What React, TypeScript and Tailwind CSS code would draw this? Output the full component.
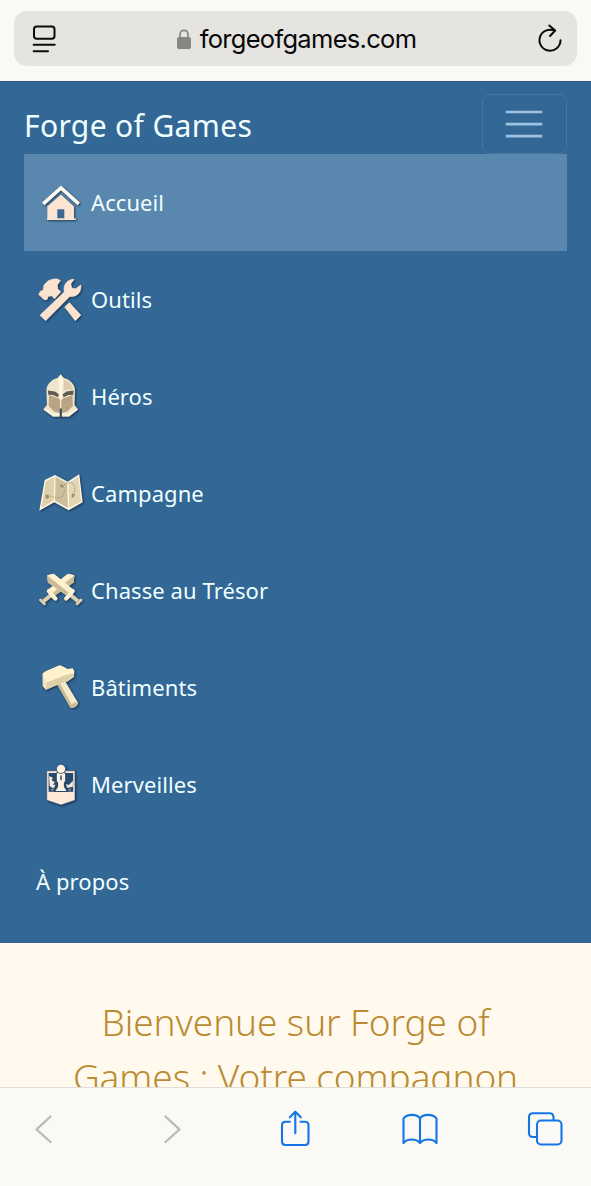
import type { ReactNode } from "react";

const shadow = "drop-shadow-[1px_1.5px_1px_rgba(15,35,60,0.75)]";

function Icon({ children }: { children: ReactNode }) {
  return (
    <svg viewBox="0 0 50 49" className={`h-[49px] w-[50px] shrink-0 ${shadow}`}>
      {children}
    </svg>
  );
}

const HouseIcon = () => (
  <Icon>
    <path d="M11.3 28.5 25 16.5 38 28.5V40.3H39.6V42H11V40.3H11.3Z" fill="#fbe5d2" />
    <path d="M21.3 31.3H28.3V40.3H21.3Z" fill="#3a6790" />
    <path d="M7.2 25.8 25 9.8 42.8 25.8" fill="none" stroke="#fffaf0" strokeWidth="3.6" />
  </Icon>
);

const ToolsIcon = () => (
  <Icon>
    <g fill="#fbe3d0" stroke="#fbe3d0" strokeWidth=".7" strokeLinejoin="round">
      <path d="M2.7 19.5 4.7 15.9 7 15.8 8 10 12.3 5.7 17.3 4 21.5 4 24.5 5.5 21.3 10 21.7 14 24.8 16.8 18.7 23.8 15.7 21 12.3 21.3 10.9 24.8 8 24.5Z" />
      <path d="M28.7 32 33.5 27.7 44.9 40.2 39.3 45.7Z" />
      <path d="M4 40.3 28.3 16.9C27 10.5 30.5 4.4 38 4.3L34.8 8.9 35.7 13 39.7 13.8 44.8 10C46 17 40.5 22.7 33.8 21.4L9.7 45.7Z" />
    </g>
  </Icon>
);

const HelmetIcon = () => (
  <Icon>
    <path d="M24.7 2.3 28 6C34.5 7.8 39 12.5 39 18.5L38.5 33 42.3 37.5 33 44.8H17L7.2 37.5 10.9 33 10.4 18.5C10.4 12.5 15 7.8 21.4 6Z" fill="#efe5ce" />
    <path d="M13 23 24 27V41L18 39.5 12.7 34Z" fill="#b9a583" />
    <path d="M36.5 23 25.4 27V41L31.4 39.5 36.8 34Z" fill="#b9a583" />
    <path d="M11.8 18.6 19 19.6 22.8 22.2 22 25.2 17 22.9 12.3 22.7Z" fill="#625b4f" />
    <path d="M37.7 18.6 30.5 19.6 26.7 22.2 27.5 25.2 32.5 22.9 37.2 22.7Z" fill="#625b4f" />
    <path d="M24.7 2.5 27 7.5 26.5 18 26 27 24.7 29 23.5 27 23 18 22.5 7.5Z" fill="#fff5df" />
    <path d="M28 7.8C33.5 9.7 36.5 13 36.7 17L29 18 27.5 17.5Z" fill="#dccdaf" />
    <path d="M24.8 36.5V45" stroke="#2d4258" strokeWidth="2" />
    <path d="M8.8 37.2 17.8 43.2 23 42.5M40.7 37.2 32 43.2 26.6 42.5" stroke="#fff5df" strokeWidth="1.7" fill="none" />
  </Icon>
);

const MapIcon = () => (
  <Icon>
    <path d="M8.7 11 19 6 31.7 12.7 43.3 5.3 46.7 33.3 32.7 41.3 18.3 33.3 3.3 41.7Z" fill="#fff8e5" />
    <path d="M9.8 12.2 18.3 7.7 17.6 31.8 5.3 38.7Z" fill="#ded0ab" />
    <path d="M19.5 7.7 31.2 14 32 39 19 31.8Z" fill="#cdbf9d" />
    <path d="M32.5 14 42.3 7.8 45.3 32.4 33.3 39Z" fill="#e2d5b1" />
    <path d="M11 28 14 27 21 29 27 27 29 21M26 18 29 15 36 13 39 18 38 27" fill="none" stroke="#97876a" strokeWidth=".7" strokeDasharray="1.6 1" />
    <path d="M9 26 12.5 25.5 13 29 10 30ZM24 15 28 16.5 27 19 24.5 18ZM36.5 24 39 26 37 29 35.3 27.5Z" fill="#9d9073" />
  </Icon>
);

const Sword = () => (
  <>
    <path d="M11.2 9.2 17.7 7.8 36.5 23 31.2 30 11.8 16.6Z" fill="#e9debd" />
    <path d="M11.2 9.2 33.2 27.4 31.2 30 11.8 16.6Z" fill="#c9bb95" />
    <path d="M11.2 9.2 17.7 7.8 36.5 23 33.8 27Z" fill="#fff1d0" />
    <path d="M34.5 29 42 35.2" stroke="#ddd0ad" strokeWidth="4" />
    <path d="M30.2 32.6 33.5 29 36.8 25" fill="none" stroke="#fff2d3" strokeWidth="4.2" strokeLinecap="round" />
    <path d="M41.2 37.7 45 34" stroke="#dccfaf" strokeWidth="3" strokeLinecap="round" />
  </>
);

const SwordsIcon = () => (
  <Icon>
    <g transform="translate(49.6 0) scale(-1 1)">
      <Sword />
    </g>
    <Sword />
  </Icon>
);

const HammerIcon = () => (
  <Icon>
    <path d="M21.2 21.5 29 18 42 39.7C41.5 43.3 37.5 45.5 34.5 44.7Z" fill="#f4e9ca" />
    <path d="M21.2 21.5 23.8 20.2 37 44 34.5 44.7Z" fill="#c9b98f" />
    <path d="M6.7 10.5 9 8.5 23.3 2.3 26.2 3 31.7 6.1 36.8 5.2 38.5 8.2 37.8 14 31 18.8 28 19 10 26.7 6.8 23Z" fill="#fff2cd" />
    <path d="M10.3 19.5 29 12.2 37.8 10.3 37.8 14 31 18.8 28 19 10 26.7Z" fill="#ddd0ab" />
    <path d="M6.7 10.5 10.3 19.5 10 26.7 6.8 23Z" fill="#f4e4ba" />
    <ellipse cx="38.3" cy="42" rx="3.7" ry="2" transform="rotate(-32 38.3 42)" fill="#cfbf95" />
  </Icon>
);

const WonderIcon = () => (
  <Icon>
    <path d="M10.7 10.8H39V40.2L25 45 10.7 40.2Z" fill="#ffeada" stroke="#244b70" strokeWidth=".6" />
    <path d="M12.6 13H37.2V31.8H12.6Z" fill="#244b70" />
    <path d="M20.2 13.5C21.5 11.5 28.5 11.5 29.8 13.5V21L28.5 23V26.5L31.5 31.5H18.5L21.5 26.5V23L20.2 21Z" fill="#fff0df" stroke="#244b70" strokeWidth="1.2" />
    <circle cx="25" cy="8.9" r="4.6" fill="#fff3e2" stroke="#244b70" strokeWidth=".8" />
    <path d="M13.5 16.5 16.5 18 15 20 18.5 22.5 16 25H19L17.5 28 14 26ZM36.5 21.5 32.8 25.5 30.5 24.5 31.5 27.5 36.5 26.5ZM15 29.8H17.5M32.5 29.8H35" fill="#ffeada" stroke="#ffeada" strokeWidth=".7" />
    <path d="M25 16V19.5" stroke="#244b70" strokeWidth="1.5" strokeLinecap="round" />
  </Icon>
);

const items = [
  { label: "Accueil", icon: <HouseIcon />, active: true },
  { label: "Outils", icon: <ToolsIcon /> },
  { label: "Héros", icon: <HelmetIcon /> },
  { label: "Campagne", icon: <MapIcon /> },
  { label: "Chasse au Trésor", icon: <SwordsIcon /> },
  { label: "Bâtiments", icon: <HammerIcon /> },
  { label: "Merveilles", icon: <WonderIcon /> },
  { label: "À propos" },
];

function AddressBar() {
  return (
    <div className="h-[81px] shrink-0 bg-[#faf9f5] px-[14px] pt-[11px]">
      <div className="flex h-[55px] items-center justify-between rounded-[13px] bg-[#e5e4e0] pr-[14px] pl-[18px]">
        <svg viewBox="0 0 26 30" className="h-[30px] w-[26px]" fill="none" stroke="#0b0b0b" strokeWidth="2" strokeLinecap="round">
          <rect x="2" y="2.5" width="20.5" height="12.3" rx="2.7" />
          <path d="M1.7 20.7H22.7M1.7 27.2H16" />
        </svg>
        <div className="flex items-center pr-[2px]">
          <svg viewBox="0 0 14 20" className="mr-[9px] h-[20px] w-[14px]">
            <path d="M3 9V5.5C3 0 11 0 11 5.5V9" fill="none" stroke="#858583" strokeWidth="1.7" />
            <rect y="8" width="14" height="12" rx="2" fill="#858583" />
          </svg>
          <span className="pt-px font-['Inter',sans-serif] text-[25.5px] leading-[30px] tracking-[-0.7px] text-[#080808]">forgeofgames.com</span>
        </div>
        <svg viewBox="0 0 26 30" className="h-[30px] w-[26px]" fill="none" stroke="#0b0b0b" strokeWidth="2" strokeLinecap="round" strokeLinejoin="round">
          <path d="M23.5 16.3A10.5 10.5 0 1 1 17.5 6.7M12.3 1.5 18.2 6.5 13 12" />
        </svg>
      </div>
    </div>
  );
}

function Toolbar() {
  return (
    <div className="flex h-[99px] shrink-0 items-start border-t border-[#deddd8] bg-[#faf9f5] pt-[22px] pl-[27px]">
      <svg viewBox="0 0 36 40" className="h-[40px] w-[36px] shrink-0" fill="none" stroke="#babab8" strokeWidth="2.3" strokeLinecap="round" strokeLinejoin="round">
        <path d="M23.5 6.5 9.5 19.3 23.5 32" />
      </svg>
      <svg viewBox="0 0 36 40" className="ml-[90px] h-[40px] w-[36px] shrink-0" fill="none" stroke="#babab8" strokeWidth="2.3" strokeLinecap="round" strokeLinejoin="round">
        <path d="M12.5 6.5 26.5 19.3 12.5 32" />
      </svg>
      <svg viewBox="0 0 36 40" className="ml-[88px] h-[40px] w-[36px] shrink-0" fill="none" stroke="#1475e5" strokeWidth="2.1" strokeLinecap="round" strokeLinejoin="round">
        <path d="M13 11.7H8.5Q5 11.7 5 15.2V31.5Q5 35 8.5 35H28Q31.5 35 31.5 31.5V15.2Q31.5 11.7 28 11.7H23.5M18.3 23.3V1.8M12.8 7.3 18.3 1.8 23.8 7.3" />
      </svg>
      <svg viewBox="0 0 38 40" className="ml-[88px] h-[40px] w-[38px] shrink-0" fill="none" stroke="#1475e5" strokeWidth="2.1" strokeLinecap="round" strokeLinejoin="round">
        <path d="M19 8.5C16 3.7 6 3.7 2.5 8.5V33C6 28.500 15 28 19 33C23 28 32 28.500 35.5 33V8.5C32 3.7 22 3.7 19 8.5ZM19 8.5V33" />
      </svg>
      <svg viewBox="0 0 36 40" className="ml-[88px] h-[40px] w-[36px] shrink-0" fill="none" stroke="#1475e5" strokeWidth="2.1" strokeLinejoin="round">
        <path d="M9 27H6Q2 27 2 23V7.2Q2 3.2 6 3.2H22.5Q26.5 3.2 26.5 7.2V10" />
        <rect x="10" y="10.5" width="24.5" height="24" rx="4" />
      </svg>
    </div>
  );
}

export default function App() {
  return (
    <div className="flex h-[1186px] w-[591px] flex-col overflow-hidden bg-[#fffaed] font-['Noto_Sans',sans-serif]">
      <AddressBar />
      <nav className="h-[861.5px] shrink-0 border-t border-[#285a85] bg-[#326796] px-[24px] pt-[12px]">
        <div className="flex h-[60px] items-center justify-between">
          <span className="pt-[2px] text-[30px] tracking-[0.35px] text-[#f0ffff]">Forge of Games</span>
          <button aria-label="Menu" className="flex h-[60px] w-[85px] items-center justify-center rounded-[8px] border border-[#45779f] pr-[1.5px]">
            <svg viewBox="0 0 38 30" className="h-[30px] w-[38px]" stroke="#a0c2e2" strokeWidth="2.7">
              <path d="M.7 3H37.3M.7 15.1H37.3M.7 27.2H37.3" />
            </svg>
          </button>
        </div>
        <ul>
          {items.map((item) => (
            <li key={item.label} className={`flex h-[97px] items-center pl-[12px] ${item.active ? "bg-[#5a87ad]" : ""}`}>
              {item.icon && <span className="mr-[5px] flex">{item.icon}</span>}
              <span className="text-[22px] tracking-[0.08px] text-[#f0ffff]">{item.label}</span>
            </li>
          ))}
        </ul>
      </nav>
      <main className="min-h-0 flex-1 overflow-hidden pt-[51px]">
        <h1 className="text-center text-[37px] leading-[55px] font-light tracking-[-0.1px] text-[#ba8b32]">
          Bienvenue sur Forge of
          <br />
          Games : Votre compagnon
        </h1>
      </main>
      <Toolbar />
    </div>
  );
}
